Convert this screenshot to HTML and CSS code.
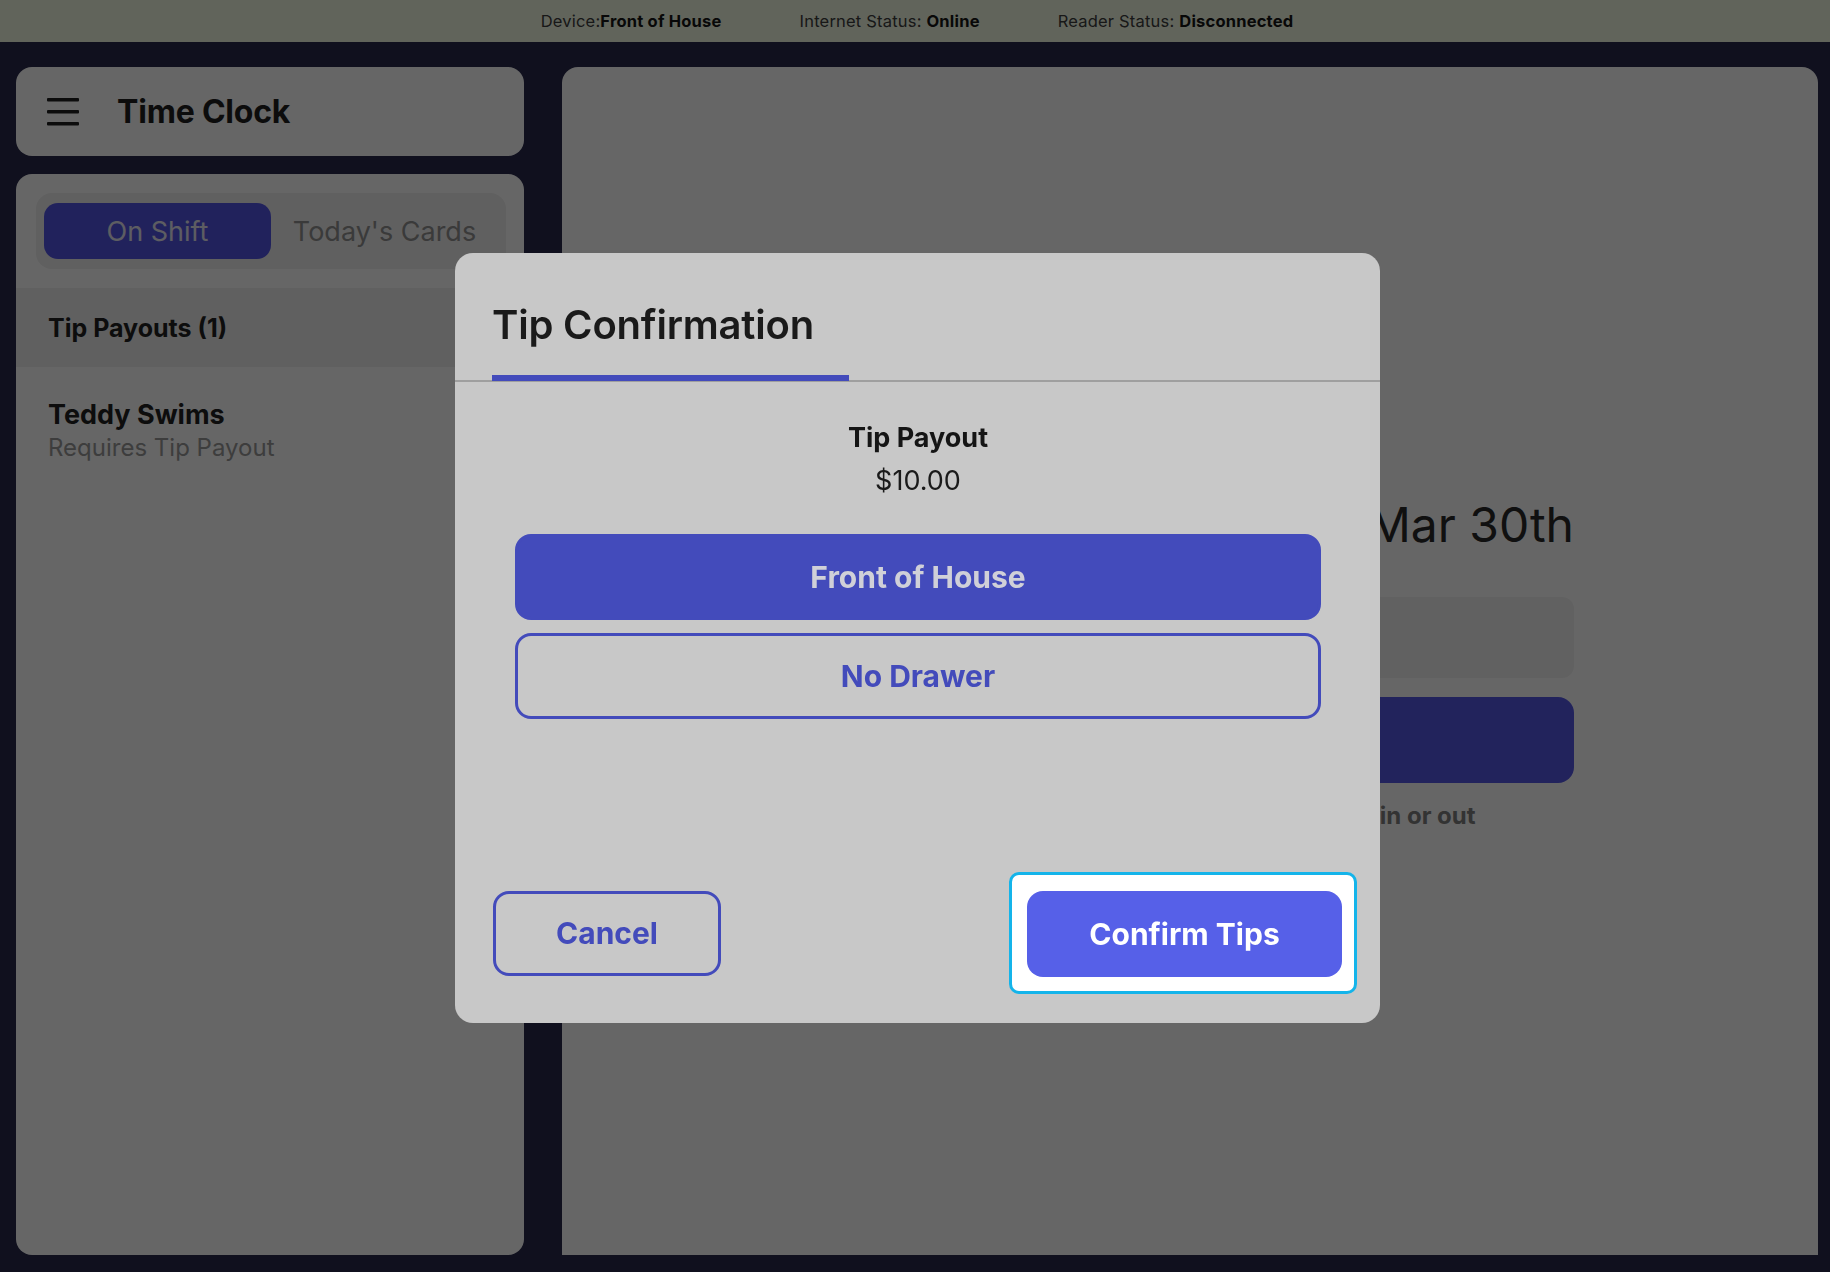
FILE: index.html
```html
<!DOCTYPE html>
<html lang="en">
<head>
<meta charset="utf-8">
<title>Time Clock</title>
<link rel="stylesheet" href="styles.css">
</head>
<body>
<div class="app">
  <header class="status-bar">
    <span class="status-item">Device:<b>Front of House</b></span>
    <span class="status-item">Internet Status: <b>Online</b></span>
    <span class="status-item">Reader Status: <b>Disconnected</b></span>
  </header>
  <main class="workspace">
    <aside class="sidebar">
      <div class="card title-card">
        <svg class="menu-icon" width="32" height="28" viewBox="0 0 32 28" aria-hidden="true">
          <rect x="0" y="0" width="32" height="3.5" rx="1"/>
          <rect x="0" y="12" width="32" height="3.5" rx="1"/>
          <rect x="0" y="24" width="32" height="3.5" rx="1"/>
        </svg>
        <h1 class="page-title">Time Clock</h1>
      </div>
      <div class="card list-card">
        <div class="segmented">
          <div class="segment active">On Shift</div>
          <div class="segment">Today's Cards</div>
        </div>
        <div class="section-row">Tip Payouts (1)</div>
        <div class="person">
          <div class="person-name">Teddy Swims</div>
          <div class="person-note">Requires Tip Payout</div>
        </div>
      </div>
    </aside>
    <section class="clock-panel">
      <div class="clock-column">
        <div class="date-row">
          <span>12:00 PM</span>
          <span>Sunday, Mar 30th</span>
        </div>
        <div class="pin-input"></div>
        <div class="clock-button">Clock In</div>
        <div class="clock-hint">Please enter your employee PIN to clock in or out</div>
      </div>
    </section>
  </main>
</div>

<div class="backdrop">
  <div class="modal">
    <div class="modal-header">
      <div class="modal-tab">Tip Confirmation</div>
    </div>
    <div class="modal-body">
      <div class="payout-label">Tip Payout</div>
      <div class="payout-amount">$10.00</div>
      <button class="drawer-btn selected">Front of House</button>
      <button class="drawer-btn">No Drawer</button>
    </div>
    <div class="modal-footer">
      <button class="cancel-btn">Cancel</button>
      <div class="focus-ring">
        <button class="confirm-btn">Confirm Tips</button>
      </div>
    </div>
  </div>
</div>
</body>
</html>
```

FILE: styles.css
```css
* { box-sizing: border-box; }

html, body {
  margin: 0;
  padding: 0;
  height: 100%;
}

body {
  font-family: Inter, "Noto Sans", "Liberation Sans", sans-serif;
  background: #28284b;
  color: #222;
  overflow: hidden;
}

.app {
  height: 1272px;
  display: flex;
  flex-direction: column;
}

.status-bar {
  height: 42px;
  flex: none;
  background: #f2fae4;
  display: flex;
  justify-content: center;
  align-items: center;
  gap: 78px;
  font-size: 16.5px;
  letter-spacing: 0.2px;
  color: #3c3c3c;
  padding-left: 4px;
}

.status-item b {
  font-weight: 700;
  color: #151515;
}

.workspace {
  flex: 1;
  display: grid;
  grid-template-columns: 508px 1fr;
  gap: 38px;
  padding: 25px 12px 17px 16px;
  min-height: 0;
}

.sidebar {
  display: flex;
  flex-direction: column;
  gap: 18px;
  min-height: 0;
}

.card {
  background: #fff;
  border-radius: 16px;
}

.title-card {
  height: 89px;
  flex: none;
  display: flex;
  align-items: center;
  padding-left: 31px;
  gap: 38px;
}

.menu-icon {
  fill: #1e1e1e;
  flex: none;
}

.page-title {
  margin: 0;
  font-size: 32px;
  font-weight: 700;
  color: #1e1e1e;
  letter-spacing: -0.2px;
}

.list-card {
  flex: 1;
  padding-top: 19px;
  overflow: hidden;
}

.segmented {
  margin: 0 18px 0 20px;
  height: 76px;
  background: #f0f0f0;
  border-radius: 16px;
  padding: 10px 8px;
  display: grid;
  grid-template-columns: 1fr 1fr;
}

.segment {
  display: flex;
  align-items: center;
  justify-content: center;
  font-size: 27px;
  color: #929292;
  border-radius: 14px;
}

.segment.active {
  background: #5355e6;
  color: #e8e8f4;
}

.section-row {
  margin-top: 19px;
  height: 79px;
  background: #efefef;
  display: flex;
  align-items: center;
  padding-left: 32px;
  font-size: 25px;
  font-weight: 700;
  color: #222;
}

.person {
  padding: 31px 32px 0;
}

.person-name {
  font-size: 27px;
  line-height: 33px;
  font-weight: 700;
  color: #222;
}

.person-note {
  margin-top: 3px;
  font-size: 24px;
  line-height: 28px;
  color: #999;
}

.clock-panel {
  background: #fff;
  border-radius: 16px 16px 0 0;
  min-height: 0;
}

.clock-column {
  width: 768px;
  margin: 0 auto;
  padding-top: 429px;
}

.date-row {
  display: flex;
  justify-content: space-between;
  font-size: 48px;
  line-height: 58px;
  color: #2a2a2a;
}

.pin-input {
  margin-top: 43px;
  height: 81px;
  background: #f3f3f3;
  border-radius: 12px;
}

.clock-button {
  margin-top: 19px;
  height: 86px;
  background: #5558e6;
  border-radius: 16px;
  display: flex;
  align-items: center;
  justify-content: center;
  color: #fff;
  font-size: 30px;
  font-weight: 700;
}

.clock-hint {
  margin-top: 18px;
  text-align: center;
  font-size: 24px;
  line-height: 29px;
  font-weight: 700;
  color: #808080;
}

/* Modal */
.backdrop {
  position: fixed;
  inset: 0;
  background: rgba(0, 0, 0, 0.6);
  display: flex;
  align-items: center;
  justify-content: center;
  padding: 4px 0 0 5px;
}

.modal {
  width: 925px;
  height: 770px;
  background: #c8c8c8;
  border-radius: 18px;
  display: flex;
  flex-direction: column;
  overflow: hidden;
}

.modal-header {
  padding-top: 48px;
  border-bottom: 2px solid #9f9f9f;
}

.modal-tab {
  display: inline-block;
  margin-left: 37px;
  padding-right: 35px;
  padding-bottom: 26px;
  border-bottom: 6px solid #434bbb;
  margin-bottom: -1px;
  font-size: 40px;
  line-height: 48px;
  font-weight: 600;
  color: #1a1a1a;
  letter-spacing: -0.2px;
}

.modal-body {
  flex: 1;
  padding: 40px 59px 0 60px;
  display: flex;
  flex-direction: column;
  align-items: stretch;
  text-align: center;
}

.payout-label {
  font-size: 27px;
  line-height: 32px;
  font-weight: 700;
  color: #151515;
}

.payout-amount {
  margin-top: 11px;
  font-size: 27px;
  line-height: 32px;
  color: #1a1a1a;
}

button {
  font-family: inherit;
  cursor: pointer;
}

.drawer-btn {
  height: 86px;
  border-radius: 16px;
  border: 3px solid #434bbb;
  background: transparent;
  color: #434bbb;
  font-size: 30px;
  font-weight: 700;
  margin-top: 13px;
}

.drawer-btn.selected {
  margin-top: 37px;
  background: #434bbb;
  color: #d0d0d8;
}

.modal-footer {
  display: flex;
  justify-content: space-between;
  align-items: center;
  padding: 0 23px 29px 38px;
}

.cancel-btn {
  width: 228px;
  height: 85px;
  border-radius: 16px;
  border: 3px solid #434bbb;
  background: transparent;
  color: #434bbb;
  font-size: 30px;
  font-weight: 700;
}

.focus-ring {
  background: #fff;
  border: 3px solid #14b4ea;
  border-radius: 10px;
  padding: 16px 12px 14px 15px;
}

.confirm-btn {
  display: block;
  width: 315px;
  height: 86px;
  border: none;
  border-radius: 16px;
  background: #5660e8;
  color: #fff;
  font-size: 30px;
  font-weight: 700;
}
```
